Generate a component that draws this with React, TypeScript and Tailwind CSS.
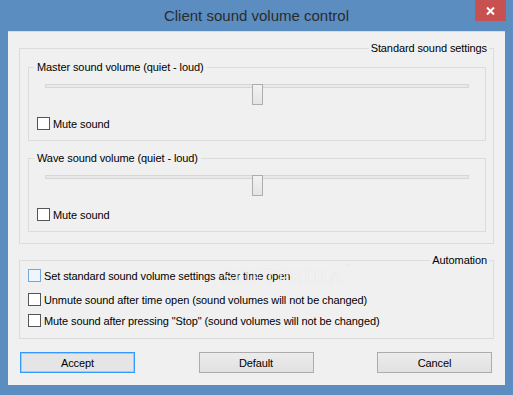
import React from "react";

function Check({ label, hover }: { label: string; hover?: boolean }) {
  return (
    <div className="flex items-center h-[13px] gap-[3px]">
      <span
        className={
          hover
            ? "w-[13px] h-[13px] shrink-0 border border-[#6fa8dc] bg-[#eef5fc]"
            : "w-[13px] h-[13px] shrink-0 border border-[#555555] bg-white"
        }
      />
      <span className="leading-[16px] whitespace-nowrap">{label}</span>
    </div>
  );
}

function Slider() {
  return (
    <div className="relative h-[21px] mx-[16px]">
      <div className="mt-[9px] h-[4px] border border-[#d6d6d6] bg-[#e7eaea]" />
      <div className="absolute top-0 left-[calc(50%-5px)] w-[11px] h-[21px] border border-[#adadad] bg-gradient-to-b from-[#f2f2f2] to-[#e4e4e4]" />
    </div>
  );
}

function VolumeGroup({ title, gapTop }: { title: string; gapTop: string }) {
  return (
    <fieldset className={`border border-[#dcdcdc] pb-[10px] ${gapTop}`}>
      <legend className="ml-[5px] px-[3px] leading-[16px] whitespace-nowrap">{title}</legend>
      <div className="mt-[8px]">
        <Slider />
      </div>
      <div className="mt-[12px] pl-[8px]">
        <Check label="Mute sound" />
      </div>
    </fieldset>
  );
}

function Button({ label, primary }: { label: string; primary?: boolean }) {
  return (
    <div
      className={
        primary
          ? "w-[115px] h-[21px] flex items-center justify-center border border-[#3399ff] shadow-[inset_0_0_0_1px_#9fcbf7] bg-[#e5e5e5] leading-[16px]"
          : "w-[115px] h-[21px] flex items-center justify-center border border-[#acacac] bg-gradient-to-b from-[#ececec] to-[#e1e1e1] leading-[16px]"
      }
    >
      {label}
    </div>
  );
}

export default function App() {
  return (
    <div className="w-[513px] h-[395px] bg-[#5b8dc0] flex flex-col font-['Liberation_Sans',Arial,sans-serif] text-[11px] tracking-[-0.1px] text-black">
      <div className="relative h-[31px] shrink-0 flex items-center justify-center">
        <span className="text-[15px] tracking-normal text-[#2b2b2b] leading-[20px]">Client sound volume control</span>
        <div className="absolute top-0 right-[7px] w-[31px] h-[21px] bg-[#c75050] flex items-center justify-center">
          <svg width="9" height="8" viewBox="0 0 9 8">
            <path d="M1 0.5 L8 7.5 M8 0.5 L1 7.5" stroke="white" strokeWidth="2" />
          </svg>
        </div>
      </div>
      <div className="relative mx-[8px] h-[354px] bg-[#f0f0f0] border-t border-[#d9d9d9] px-[11px] pt-[8px] flex flex-col">
        <fieldset className="border border-[#dcdcdc] pl-[8px] pr-[7px] pb-[11px]">
          <legend className="ml-auto mr-[-3px] px-[2px] leading-[16px] whitespace-nowrap">Standard sound settings</legend>
          <VolumeGroup title="Master sound volume (quiet - loud)" gapTop="mt-[3px]" />
          <VolumeGroup title="Wave sound volume (quiet - loud)" gapTop="mt-[9px]" />
        </fieldset>
        <fieldset className="mt-[8px] border border-[#dcdcdc] pl-[8px] pb-[11px]">
          <legend className="ml-auto mr-[4px] px-[2px] leading-[16px] whitespace-nowrap">Automation</legend>
          <div className="mt-[1px]">
            <Check label="Set standard sound volume settings after time open" hover />
          </div>
          <div className="mt-[11px]">
            <Check label="Unmute sound after time open (sound volumes will not be changed)" />
          </div>
          <div className="mt-[8px]">
            <Check label={'Mute sound after pressing "Stop" (sound volumes will not be changed)'} />
          </div>
        </fieldset>
        <div className="mt-[13px] flex justify-between pl-[1px] pr-[2px]">
          <Button label="Accept" primary />
          <Button label="Default" />
          <Button label="Cancel" />
        </div>
        <div className="pointer-events-none absolute left-[214px] top-[230px] font-['Liberation_Serif',serif] text-[21px] tracking-[1px] text-white/70 [text-shadow:0_0_1px_rgba(0,0,0,0.12)]">
          SOFTPEDIA<span className="align-top text-[6px]">™</span>
        </div>
      </div>
    </div>
  );
}
